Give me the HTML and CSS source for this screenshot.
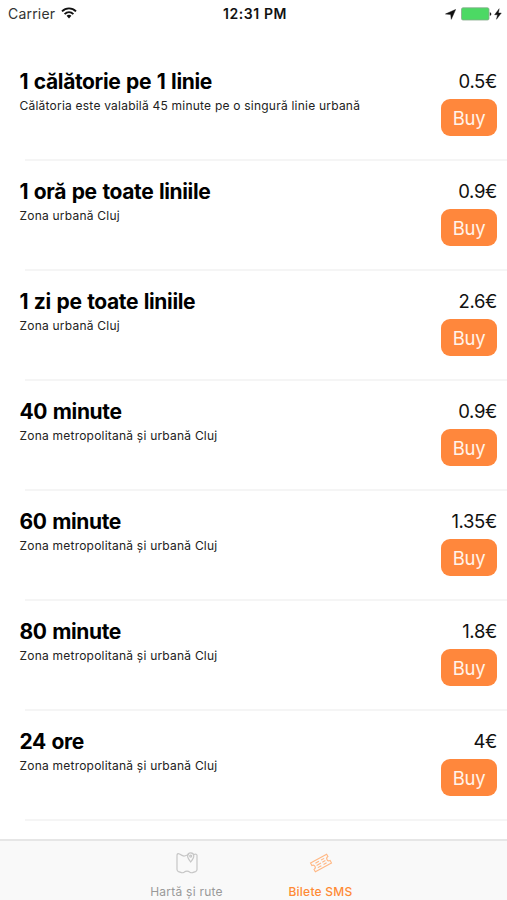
FILE: index.html
```html
<!DOCTYPE html>
<html lang="ro">
<head>
<meta charset="utf-8">
<title>Bilete SMS</title>
<link rel="stylesheet" href="styles.css">
</head>
<body>
<div class="screen">
  <header class="status">
    <div class="status-left">
      <span class="carrier">Carrier</span>
      <svg class="wifi" viewBox="0 0 16 12" width="16" height="12"><g fill="none" stroke="#111" stroke-width="1.9"><path d="M1 4.4C5 .4 11 .4 15 4.4"/><path d="M3.6 7.1C6.2 4.6 9.8 4.6 12.4 7.1"/></g><path d="M5.6 8.8C7 7.5 9 7.5 10.4 8.8L8 11.4Z" fill="#111"/></svg>
    </div>
    <span class="time">12:31 PM</span>
    <div class="status-right">
      <svg class="location" viewBox="0 0 11 11" width="11" height="11"><path d="M10.6.5 6.3 10.3 5.7 5.5.5 5Z" fill="#111" stroke="#111" stroke-width=".5"/></svg>
      <svg class="battery" viewBox="0 0 32 14" width="32" height="14"><rect x=".5" y=".8" width="27.5" height="12.2" rx="1.5" fill="#4cd964" stroke="#86a98b" stroke-width=".8"/><path d="M28.8 5.2c2 .3 2 3.3 0 3.6Z" fill="#222"/></svg>
      <svg class="bolt" viewBox="0 0 8 12" width="8" height="12"><path d="M5.2.7.6 6.7H3.5L2.5 11.3 7.3 5H4.4Z" fill="#111" stroke="#111" stroke-width=".4"/></svg>
    </div>
  </header>
  <main class="tickets">
    <article class="ticket"><div class="info"><h2>1 călătorie pe 1 linie</h2><p>Călătoria este valabilă 45 minute pe o singură linie urbană</p></div><div class="purchase"><span class="price">0.5€</span><button class="buy">Buy</button></div></article>
    <article class="ticket"><div class="info"><h2>1 oră pe toate liniile</h2><p>Zona urbană Cluj</p></div><div class="purchase"><span class="price">0.9€</span><button class="buy">Buy</button></div></article>
    <article class="ticket"><div class="info"><h2>1 zi pe toate liniile</h2><p>Zona urbană Cluj</p></div><div class="purchase"><span class="price">2.6€</span><button class="buy">Buy</button></div></article>
    <article class="ticket"><div class="info"><h2>40 minute</h2><p>Zona metropolitană și urbană Cluj</p></div><div class="purchase"><span class="price">0.9€</span><button class="buy">Buy</button></div></article>
    <article class="ticket"><div class="info"><h2>60 minute</h2><p>Zona metropolitană și urbană Cluj</p></div><div class="purchase"><span class="price">1.35€</span><button class="buy">Buy</button></div></article>
    <article class="ticket"><div class="info"><h2>80 minute</h2><p>Zona metropolitană și urbană Cluj</p></div><div class="purchase"><span class="price">1.8€</span><button class="buy">Buy</button></div></article>
    <article class="ticket"><div class="info"><h2>24 ore</h2><p>Zona metropolitană și urbană Cluj</p></div><div class="purchase"><span class="price">4€</span><button class="buy">Buy</button></div></article>
  </main>
  <nav class="tabs">
    <div class="tab">
      <svg viewBox="0 0 24 24" width="24" height="24" fill="none" stroke="#c6c6c6" stroke-width="1.2"><path d="M14 3.5 9.5 5Q8.7 5.3 7.5 4.6L4.5 3Q2 2 2 4.5V18.5Q2 20 3.5 20.6L6.5 21.6Q7.8 22 9 21.2Q12 19 15 21.2Q16.2 22 17.5 21.6L20.5 20.6Q22 20 22 18.5V4.5Q22 2.5 18.8 3.5"/><path d="M12.6 5A3.1 3.1 0 0 1 18.8 5Q18.8 7 15.7 11Q12.6 7 12.6 5Z"/><circle cx="15.7" cy="5.1" r="1"/></svg>
      <span>Hartă și rute</span>
    </div>
    <div class="tab active">
      <svg viewBox="0 0 24 24" width="24" height="24" fill="none" stroke="#ffb783" stroke-width="1.1"><g transform="rotate(-29 12 12)"><path d="M2.8 7H21.2V9.7A2.3 2.3 0 0 0 21.2 14.3V17H2.8V14.3A2.3 2.3 0 0 0 2.8 9.7Z"/><path d="M7 9.5H11M7 12H12M7 14.5H11M13.5 9.5H17M13.5 12H17M13.5 14.5H17"/></g></svg>
      <span>Bilete SMS</span>
    </div>
  </nav>
</div>
</body>
</html>
```
FILE: styles.css
```css
* { box-sizing: border-box; }
body { margin: 0; background: #fff; color: #000; font-family: Inter, "Liberation Sans", sans-serif; }
.screen { height: 900px; display: flex; flex-direction: column; overflow: hidden; }
.status { height: 51px; flex: none; display: grid; grid-template-columns: 1fr auto 1fr; align-items: start; padding: 4px 5px 0 8px; font-size: 14px; line-height: 20px; color: #111; }
.status-left, .status-right { display: flex; align-items: center; height: 20px; }
.carrier { color: #333; letter-spacing: .2px; }
.wifi { margin: -3px 0 0 6px; }
.time { font-weight: 600; letter-spacing: .6px; }
.status-right { justify-content: flex-end; }
.location { margin-right: 5px; }
.bolt { margin-left: 1px; }
.tickets { flex: 1; min-height: 0; }
.ticket { height: 110px; margin-left: 19.5px; padding: 18px 10px 0 0; display: flex; justify-content: space-between; background: linear-gradient(#f5f5f5, #f5f5f5) 5px 100% / 100% 2px no-repeat; }
h2 { margin: 0; font-size: 21px; font-weight: 700; line-height: 26px; letter-spacing: -.38px; word-spacing: 1.1px; }
p { margin: 3px 0 0; font-size: 12px; line-height: 16px; letter-spacing: .22px; color: #222; }
.purchase { display: flex; flex-direction: column; align-items: flex-end; }
.price { font-size: 18.5px; line-height: 24px; letter-spacing: -.35px; color: #111; }
.buy { width: 56px; height: 37px; margin-top: 6px; padding: 0; border: 0; border-radius: 9px; background: #ff873c; color: #fff3e9; font: 18.5px/36px Inter, sans-serif; letter-spacing: -.3px; }
.tabs { height: 61px; flex: none; display: flex; justify-content: center; border-top: 2px solid #e6e6e6; background: #f9f9f9; }
.tab { width: 134px; padding-top: 10px; display: flex; flex-direction: column; align-items: center; color: #999; font-size: 12px; line-height: 16px; }
.tab span { margin-top: 9px; letter-spacing: .25px; }
.tab.active { color: #ff8a35; font-weight: 500; }
```
